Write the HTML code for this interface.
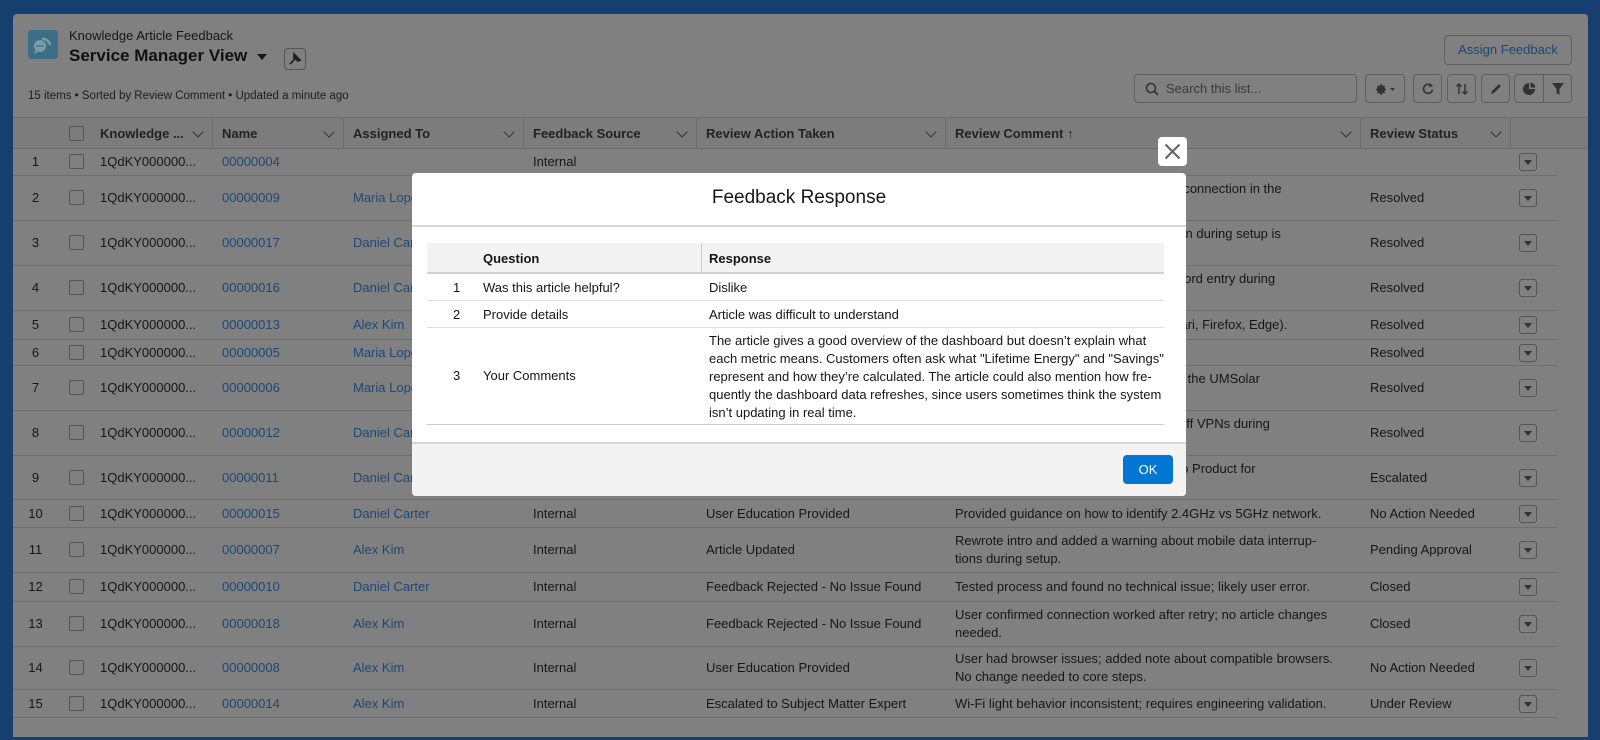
<!DOCTYPE html>
<html><head><meta charset="utf-8"><style>
*{box-sizing:border-box;margin:0;padding:0}
body{width:1600px;height:740px;overflow:hidden;background:#163f70;font-family:"Liberation Sans",sans-serif;font-size:13px;color:#161616;position:relative}
.card{position:absolute;left:13px;top:14px;width:1575px;height:723px;background:#808080;border-radius:4px 4px 0 0}
.abs{position:absolute}
.btn{position:absolute;border:1px solid #5f5f5f;border-radius:4px;background:#808080}
.hdr{position:absolute;left:13px;top:117px;width:1575px;height:32px;background:#7c7c7c;border-top:1px solid #6c6c6c;border-bottom:1px solid #6c6c6c}
.th{position:absolute;top:0;height:31px;line-height:31px;font-weight:bold;color:#222;padding-left:9px;border-right:1px solid #6c6c6c}
.chev{position:absolute;right:10px;top:10px;width:8px;height:8px;border-right:1.5px solid #333;border-bottom:1.5px solid #333;transform:rotate(45deg)}
.row{position:absolute;left:13px;width:1545px;border-bottom:1px solid #6e6e6e}
.c{position:absolute;top:0;height:100%;display:flex;align-items:center;padding-left:9px;line-height:18px}
.lk{color:#1c4877}
.cb{position:absolute;left:56px;width:15px;height:15px;border:1px solid #555;border-radius:2px;top:50%;margin-top:-8px}
.dd{position:absolute;left:1506px;top:50%;margin-top:-9px;width:18px;height:18px;border:1px solid #555;border-radius:3px}
.dd:after{content:"";position:absolute;left:4px;top:6px;border-left:4px solid transparent;border-right:4px solid transparent;border-top:5px solid #333}
.modal{position:absolute;left:412px;top:173px;width:774px;height:323px;background:#fff;border-radius:4px;overflow:hidden}
</style></head><body>
<div class="card"></div>
<div class="abs" style="left:28px;top:30px;width:30px;height:29px;background:#3a6f87;border-radius:3px">
<svg width="30" height="29" viewBox="0 0 30 29"><path d="M14 9a7 7 0 0 1 8 6" stroke="#7d9aa8" stroke-width="2.5" fill="none"/><circle cx="12" cy="16" r="6" fill="#7d9aa8"/><path d="M7 20l-1 4 4-2z" fill="#7d9aa8"/><circle cx="9.5" cy="16" r="1" fill="#3a6f87"/><circle cx="12" cy="16" r="1" fill="#3a6f87"/><circle cx="14.5" cy="16" r="1" fill="#3a6f87"/></svg></div>
<div class="abs" style="left:69px;top:28px;font-size:13px;color:#161616">Knowledge Article Feedback</div>
<div class="abs" style="left:69px;top:46px;font-size:17px;font-weight:bold;color:#111">Service Manager View</div>
<div class="abs" style="left:257px;top:54px;border-left:5px solid transparent;border-right:5px solid transparent;border-top:6px solid #161616"></div>
<div class="btn" style="left:284px;top:48px;width:22px;height:22px;border-color:#555"><svg width="20" height="20" viewBox="0 0 20 20"><path d="M9 5l6 6-2 1-3-3-1 2zM9 11l-4 4" stroke="#222" stroke-width="1.8" fill="#222"/></svg></div>
<div class="abs" style="left:28px;top:90px;font-size:11.5px;color:#1d1d1d">15 items • Sorted by Review Comment • Updated a minute ago</div>
<div class="btn" style="left:1444px;top:35px;width:128px;height:30px;text-align:center;line-height:28px;color:#1c4877;font-size:13px">Assign Feedback</div>
<div class="btn" style="left:1134px;top:74px;width:223px;height:29px"><svg class="abs" style="left:10px;top:7px" width="14" height="14" viewBox="0 0 14 14"><circle cx="6" cy="6" r="4.5" stroke="#333" stroke-width="1.6" fill="none"/><path d="M9.5 9.5l3.5 3.5" stroke="#333" stroke-width="1.8"/></svg><span class="abs" style="left:31px;top:6px;color:#3a3a3a">Search this list...</span></div>
<div class="btn" style="left:1365px;top:74px;width:40px;height:29px"><svg class="abs" style="left:9px;top:8px" width="22" height="13" viewBox="0 0 22 13"><circle cx="6" cy="6.5" r="4" fill="#333"/><circle cx="6" cy="6.5" r="1.5" fill="#808080"/><path d="M6 1v11M1 6.5h10M2.5 3l7 7M9.5 3l-7 7" stroke="#333" stroke-width="1.6"/><path d="M15 5h5l-2.5 3z" fill="#333"/></svg></div>
<div class="btn" style="left:1413px;top:74px;width:29px;height:29px"><svg class="abs" style="left:7px;top:7px" width="14" height="14" viewBox="0 0 14 14"><path d="M11.5 7.5A4.5 4.5 0 1 1 10 3.5" stroke="#333" stroke-width="1.6" fill="none"/><path d="M8 1l4 2.5-3.5 2z" fill="#333"/></svg></div>
<div class="btn" style="left:1447px;top:74px;width:29px;height:29px"><svg class="abs" style="left:7px;top:7px" width="14" height="14" viewBox="0 0 14 14"><path d="M4 12V2M1.5 4.5L4 2l2.5 2.5M10 2v10M7.5 9.5L10 12l2.5-2.5" stroke="#333" stroke-width="1.5" fill="none"/></svg></div>
<div class="btn" style="left:1481px;top:74px;width:29px;height:29px"><svg class="abs" style="left:7px;top:7px" width="14" height="14" viewBox="0 0 14 14"><path d="M2 12l1-3 7-7 2 2-7 7z" fill="#333"/></svg></div>
<div class="btn" style="left:1514px;top:74px;width:58px;height:29px"><div class="abs" style="left:28px;top:0;width:1px;height:27px;background:#5f5f5f"></div><svg class="abs" style="left:7px;top:7px" width="14" height="14" viewBox="0 0 14 14"><path d="M7 1v6h6A6 6 0 1 1 7 1z" fill="#333"/><path d="M8.5 0.5A5.5 5.5 0 0 1 13.5 5.5H8.5z" fill="#333"/></svg><svg class="abs" style="left:36px;top:7px" width="14" height="14" viewBox="0 0 14 14"><path d="M1 1h12L8.5 7v6l-3-2V7z" fill="#333"/></svg></div>

<div class="hdr">
<div class="cb" style="left:56px;width:15px;height:15px;top:16px"></div>
<div class="th" style="left:78px;width:122px">Knowledge ...<span class="chev"></span></div>
<div class="th" style="left:200px;width:131px">Name<span class="chev"></span></div>
<div class="th" style="left:331px;width:180px">Assigned To<span class="chev"></span></div>
<div class="th" style="left:511px;width:173px">Feedback Source<span class="chev"></span></div>
<div class="th" style="left:684px;width:249px">Review Action Taken<span class="chev"></span></div>
<div class="th" style="left:933px;width:415px">Review Comment ↑<span class="chev"></span></div>
<div class="th" style="left:1348px;width:150px">Review Status<span class="chev"></span></div>
</div>

<div id="rows"></div>
<script>
var rows=[
[148,176,"00000004","","Internal","","",""],
[176,221,"00000009","Maria Lopez","Internal","","Customers reported trouble completing connection in the<br>app during setup.","Resolved"],
[221,266,"00000017","Daniel Carter","Internal","","Clarified that the default password shown during setup is<br>in the app.","Resolved"],
[266,311,"00000016","Daniel Carter","Internal","","Added note about case-sensitive password entry during<br>setup steps.","Resolved"],
[311,340,"00000013","Alex Kim","Internal","","Tested in major browsers (Chrome, Safari, Firefox, Edge).","Resolved"],
[340,366,"00000005","Maria Lopez","Internal","","","Resolved"],
[366,411,"00000006","Maria Lopez","Internal","","Confirmed device must be connected to the UMSolar<br>network.","Resolved"],
[411,456,"00000012","Daniel Carter","Internal","","Added troubleshooting step for turning off VPNs during<br>setup.","Resolved"],
[456,500,"00000011","Daniel Carter","Internal","","Issue reproduced in testing; escalated to Product for<br>review.","Escalated"],
[500,528,"00000015","Daniel Carter","Internal","User Education Provided","Provided guidance on how to identify 2.4GHz vs 5GHz network.","No Action Needed"],
[528,573,"00000007","Alex Kim","Internal","Article Updated","Rewrote intro and added a warning about mobile data interrup-<br>tions during setup.","Pending Approval"],
[573,602,"00000010","Daniel Carter","Internal","Feedback Rejected - No Issue Found","Tested process and found no technical issue; likely user error.","Closed"],
[602,647,"00000018","Alex Kim","Internal","Feedback Rejected - No Issue Found","User confirmed connection worked after retry; no article changes<br>needed.","Closed"],
[647,690,"00000008","Alex Kim","Internal","User Education Provided","User had browser issues; added note about compatible browsers.<br>No change needed to core steps.","No Action Needed"],
[690,718,"00000014","Alex Kim","Internal","Escalated to Subject Matter Expert","Wi-Fi light behavior inconsistent; requires engineering validation.","Under Review"]];
var h="";
rows.forEach(function(r,i){
h+='<div class="row" style="top:'+r[0]+'px;height:'+(r[1]-r[0])+'px">'+
'<div class="c" style="left:0;width:45px;justify-content:center;padding:0">'+(i+1)+'</div>'+
'<div class="cb"></div>'+
'<div class="c" style="left:78px">1QdKY000000...</div>'+
'<div class="c lk" style="left:200px">'+r[2]+'</div>'+
'<div class="c lk" style="left:331px">'+r[3]+'</div>'+
'<div class="c" style="left:511px">'+r[4]+'</div>'+
'<div class="c" style="left:684px">'+r[5]+'</div>'+
'<div class="c" style="left:933px;width:415px">'+r[6]+'</div>'+
'<div class="c" style="left:1348px">'+r[7]+'</div>'+
'<div class="dd"></div></div>';});
document.getElementById("rows").innerHTML=h;
</script>

<div class="abs" style="left:1158px;top:137px;width:29px;height:29px;background:#fff;border-radius:4px"><svg width="29" height="29" viewBox="0 0 29 29"><path d="M7.5 7.5l14 14M21.5 7.5l-14 14" stroke="#666" stroke-width="2.2"/></svg></div>
<div class="modal">
<div style="height:54px;border-bottom:2px solid #d8d8d8;text-align:center;line-height:50px;font-size:19px;color:#181818">Feedback Response</div>
<div class="abs" style="left:15px;top:70px;width:737px;border-bottom:1px solid #ccc">
<div style="height:31px;background:#f3f3f3;border-bottom:2px solid #d0d0d0;position:relative;font-weight:bold">
<span class="abs" style="left:56px;top:8px">Question</span>
<div class="abs" style="left:274px;top:0;width:1px;height:29px;background:#ccc"></div>
<span class="abs" style="left:282px;top:8px">Response</span></div>
<div style="height:27px;border-bottom:1px solid #ddd;position:relative"><span class="abs" style="left:26px;top:6px">1</span><span class="abs" style="left:56px;top:6px">Was this article helpful?</span><span class="abs" style="left:282px;top:6px">Dislike</span></div>
<div style="height:27px;border-bottom:1px solid #ddd;position:relative"><span class="abs" style="left:26px;top:6px">2</span><span class="abs" style="left:56px;top:6px">Provide details</span><span class="abs" style="left:282px;top:6px">Article was difficult to understand</span></div>
<div style="height:96px;position:relative"><span class="abs" style="left:26px;top:40px">3</span><span class="abs" style="left:56px;top:40px">Your Comments</span><div class="abs" style="left:282px;top:4px;width:450px;line-height:18px;white-space:nowrap">The article gives a good overview of the dashboard but doesn’t explain what<br>each metric means. Customers often ask what "Lifetime Energy" and "Savings"<br>represent and how they’re calculated. The article could also mention how fre-<br>quently the dashboard data refreshes, since users sometimes think the system<br>isn’t updating in real time.</div></div>
</div>
<div class="abs" style="left:0;top:269px;width:774px;height:54px;background:#f3f3f3;border-top:2px solid #d8d8d8">
<div class="abs" style="left:711px;top:11px;width:50px;height:29px;background:#0176d3;border-radius:4px;color:#fff;text-align:center;line-height:29px;font-size:13px">OK</div></div>
</div>
</body></html>
